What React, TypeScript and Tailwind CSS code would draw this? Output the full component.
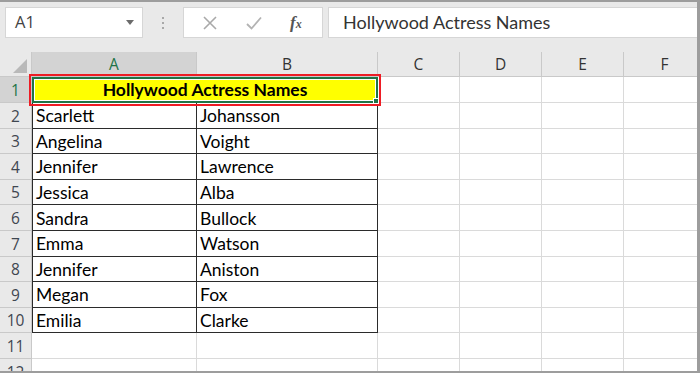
import React from "react";

const COLS = [
  { key: "A", w: "w-[165px]" },
  { key: "B", w: "w-[181px]" },
  { key: "C", w: "w-[82px]" },
  { key: "D", w: "w-[82px]" },
  { key: "E", w: "w-[82px]" },
  { key: "F", w: "w-[82px]" },
];

const NAMES: [string, string][] = [
  ["Scarlett", "Johansson"],
  ["Angelina", "Voight"],
  ["Jennifer", "Lawrence"],
  ["Jessica", "Alba"],
  ["Sandra", "Bullock"],
  ["Emma", "Watson"],
  ["Jennifer", "Aniston"],
  ["Megan", "Fox"],
  ["Emilia", "Clarke"],
];

const cellFont = { fontFamily: "Lato, 'Open Sans', sans-serif" };
const uiFont = { fontFamily: "'Open Sans', 'Noto Sans', sans-serif" };

function RowLabel({ n, active }: { n: number; active?: boolean }) {
  return (
    <div
      style={uiFont}
      className={`w-[32px] shrink-0 flex items-center justify-center pt-[2px] border-r border-b border-[#c9c9c9] text-[15.5px] ${
        active ? "bg-[#d3d3d3] text-[#217346]" : "bg-[#e9e9e9] text-[#3f4650]"
      }`}
    >
      {n}
    </div>
  );
}

function BlankCells({ from }: { from: number }) {
  return (
    <>
      {COLS.slice(from).map((c) => (
        <div key={c.key} className={`${c.w} shrink-0 border-r border-b border-[#dadada] bg-white`} />
      ))}
    </>
  );
}

export default function App() {
  return (
    <div className="w-[700px] h-[373px] overflow-hidden bg-[#e9e9e9] border-t-2 border-r-[3px] border-b-2 border-[#9d9d9d] flex flex-col">
      {/* Formula bar */}
      <div className="h-[50px] shrink-0 flex items-start pt-[5px] pl-[5px]">
        <div
          style={uiFont}
          className="w-[138px] h-[31px] bg-white border border-[#d6d6d6] flex items-center justify-between pl-[9px] pr-[8px] text-[16.5px] text-[#444]"
        >
          <span>A1</span>
          <span className="w-0 h-0 border-l-[4px] border-r-[4px] border-t-[5px] border-l-transparent border-r-transparent border-t-[#6b6b6b]" />
        </div>
        <div className="w-[40px] h-[31px] flex flex-col items-center justify-center gap-[3px]">
          <span className="w-[2px] h-[2px] bg-[#a8a8a8]" />
          <span className="w-[2px] h-[2px] bg-[#a8a8a8]" />
          <span className="w-[2px] h-[2px] bg-[#a8a8a8]" />
        </div>
        <div className="w-[140px] h-[31px] bg-white border border-[#d6d6d6] flex items-center">
          <svg width="14" height="14" viewBox="0 0 14 14" className="ml-[19px]">
            <path d="M1 1L13 13M13 1L1 13" stroke="#a9a9a9" strokeWidth="1.6" />
          </svg>
          <svg width="16" height="14" viewBox="0 0 16 14" className="ml-[29px]">
            <path d="M1 8L5.5 12.5L15 1.5" stroke="#b3b3b3" strokeWidth="1.8" fill="none" />
          </svg>
          <span
            className="ml-[28px] text-[#555] italic font-bold leading-none"
            style={{ fontFamily: "'Liberation Serif', 'DejaVu Serif', serif" }}
          >
            <span className="text-[17px]">f</span>
            <span className="text-[12px]">x</span>
          </span>
        </div>
        <div
          style={cellFont}
          className="ml-[5px] flex-1 h-[31px] bg-white border-y border-l border-[#d6d6d6] flex items-center pl-[14px] text-[18px] text-[#333]"
        >
          Hollywood Actress Names
        </div>
      </div>

      {/* Grid */}
      <div className="relative flex-1 bg-white">
        {/* Column headers */}
        <div className="h-[25px] flex bg-[#e9e9e9]">
          <div className="w-[32px] shrink-0 relative border-r border-b border-[#c9c9c9]">
            <svg width="14" height="14" viewBox="0 0 14 14" className="absolute right-[4px] bottom-[3px]">
              <path d="M14 0L14 14L0 14Z" fill="#b9b9b9" />
            </svg>
          </div>
          {COLS.map((c) => (
            <div
              key={c.key}
              style={uiFont}
              className={`${c.w} shrink-0 flex items-center justify-center pt-[1px] border-r border-b border-[#c9c9c9] text-[15.5px] ${
                c.key === "A" ? "bg-[#d3d3d3] text-[#217346]" : "text-[#333]"
              }`}
            >
              {c.key}
            </div>
          ))}
        </div>

        {/* Row 1 */}
        <div className="h-[26px] flex">
          <RowLabel n={1} active />
          <div
            style={cellFont}
            className="relative w-[346px] shrink-0 bg-[#ffff00] border-2 border-[#217346] shadow-[inset_0_0_0_1px_#ffffff] flex items-center justify-center pt-[1px] font-bold text-[17.5px] text-black"
          >
            Hollywood Actress Names
            <span className="absolute -right-[3px] -bottom-[3px] w-[6px] h-[6px] bg-[#217346] border border-white" />
          </div>
          <BlankCells from={2} />
        </div>

        {/* Rows 2-10 */}
        {NAMES.map(([first, last], i) => (
          <div key={i} className="h-[25.6px] flex">
            <RowLabel n={i + 2} />
            <div
              style={cellFont}
              className="w-[165px] shrink-0 border-l border-r border-b border-[#2b2b2b] flex items-center pt-[2px] pl-[3px] text-[17.5px] text-black"
            >
              {first}
            </div>
            <div
              style={cellFont}
              className="w-[181px] shrink-0 border-r border-b border-[#2b2b2b] flex items-center pt-[2px] pl-[3px] text-[17.5px] text-black"
            >
              {last}
            </div>
            <BlankCells from={2} />
          </div>
        ))}

        {/* Rows 11-12 */}
        {[11, 12].map((n) => (
          <div key={n} className="h-[25.6px] flex">
            <RowLabel n={n} />
            <BlankCells from={0} />
          </div>
        ))}

        {/* red highlight box */}
        <div className="absolute left-[29px] top-[22px] w-[352px] h-[32px] border-2 border-[#ee1c24] pointer-events-none" />
      </div>
    </div>
  );
}
